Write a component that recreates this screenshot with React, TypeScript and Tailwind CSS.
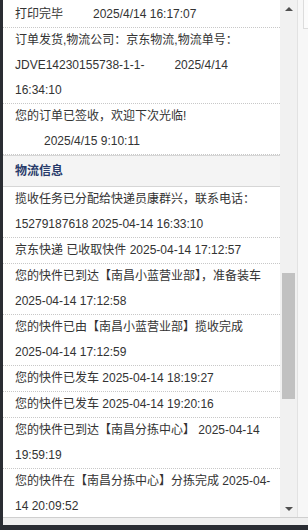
import React from 'react';

type Row = { lines: { text: string; indent?: boolean }[] };

const orderRows: Row[] = [
  { lines: [{ text: '打印完毕\u00a0\u00a0\u00a0\u00a0\u00a0\u00a0\u00a0\u00a0\u00a02025/4/14 16:17:07' }] },
  {
    lines: [
      { text: '订单发货,物流公司：京东物流,物流单号：' },
      { text: 'JDVE14230155738-1-1-\u00a0\u00a0\u00a0\u00a0\u00a0\u00a0\u00a0\u00a0\u00a02025/4/14' },
      { text: '16:34:10' },
    ],
  },
  {
    lines: [
      { text: '您的订单已签收，欢迎下次光临!' },
      { text: '2025/4/15 9:10:11', indent: true },
    ],
  },
];

const logisticsRows: Row[] = [
  { lines: [{ text: '揽收任务已分配给快递员康群兴，联系电话：' }, { text: '15279187618 2025-04-14 16:33:10' }] },
  { lines: [{ text: '京东快递 已收取快件 2025-04-14 17:12:57' }] },
  { lines: [{ text: '您的快件已到达【南昌小蓝营业部】，准备装车' }, { text: '2025-04-14 17:12:58' }] },
  { lines: [{ text: '您的快件已由【南昌小蓝营业部】揽收完成' }, { text: '2025-04-14 17:12:59' }] },
  { lines: [{ text: '您的快件已发车 2025-04-14 18:19:27' }] },
  { lines: [{ text: '您的快件已发车 2025-04-14 19:20:16' }] },
  { lines: [{ text: '您的快件已到达【南昌分拣中心】 2025-04-14' }, { text: '19:59:19' }] },
  { lines: [{ text: '您的快件在【南昌分拣中心】分拣完成 2025-04-' }, { text: '14 20:09:52' }] },
];

function RowItem({ row, last }: { row: Row; last?: boolean }) {
  return (
    <div className={`pl-[12px] ${last ? '' : 'border-b border-dotted border-[#c8c8c8]'}`}>
      {row.lines.map((l, i) => (
        <div key={i} className={`h-[25px] leading-[25px] whitespace-nowrap ${l.indent ? 'pl-[29px]' : ''}`}>
          {l.text}
        </div>
      ))}
    </div>
  );
}

export default function App() {
  return (
    <div
      className="w-[308px] h-[530px] bg-[#2a2d33] overflow-hidden flex flex-col"
      style={{ fontFamily: '"Liberation Sans", "Noto Sans CJK SC", sans-serif' }}
    >
      <div className="flex flex-col pl-[3px] h-[525px]">
        {/* panel */}
        <div className="flex h-[518px] bg-white border-b border-[#cfcfcf]">
          {/* scroll content */}
          <div className="w-[277px] overflow-hidden text-[12px] text-[#333]">
            <div className="mt-[2px]">
              {orderRows.map((r, i) => (
                <RowItem key={i} row={r} />
              ))}
              <div className="h-[32px] border-y border-[#d6d6d6] bg-[#f4f4f4] pl-[12px] leading-[30px] font-bold text-[#273a6a]">
                物流信息
              </div>
              {logisticsRows.map((r, i) => (
                <RowItem key={i} row={r} last={i === logisticsRows.length - 1} />
              ))}
            </div>
          </div>

          {/* scrollbar */}
          <div className="w-[17px] bg-[#f1f1f1] flex flex-col items-center">
            <div className="h-[17px] flex items-center justify-center">
              <div className="w-0 h-0 border-l-[4px] border-r-[4px] border-b-[4px] border-l-transparent border-r-transparent border-b-[#505050]" />
            </div>
            <div className="flex-1 w-full px-[2px]">
              <div className="mt-[256px] h-[126px] bg-[#c1c1c1]" />
            </div>
            <div className="h-[17px] flex items-center justify-center">
              <div className="w-0 h-0 border-l-[4px] border-r-[4px] border-t-[4px] border-l-transparent border-r-transparent border-t-[#505050]" />
            </div>
          </div>

          {/* right edge */}
          <div className="flex-1 bg-[#f7f7f7] border-l border-[#e2e2e2] flex justify-end">
            <div className="w-[5px] h-[29px] bg-[#fbfbfb] border-l border-b border-[#dcdcdc]" />
          </div>
        </div>
        <div className="flex-1 bg-[#efefef]" />
      </div>
    </div>
  );
}
